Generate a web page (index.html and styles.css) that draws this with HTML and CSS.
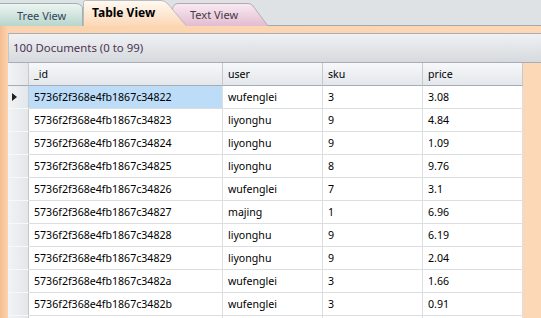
FILE: index.html
```html
<!DOCTYPE html>
<html lang="en">
<head>
<meta charset="UTF-8">
<title>Table View</title>
<link rel="stylesheet" href="styles.css">
</head>
<body>

<!-- Вкладки -->
<div class="tabs">
  <div class="tab tab-tree">
    <svg class="tab-shape" width="84" height="26" viewBox="0 0 84 26">
      <defs>
        <linearGradient id="gTree" x1="0" y1="0" x2="0" y2="1">
          <stop offset="0" stop-color="#eef6f3"/>
          <stop offset="1" stop-color="#b7d5cc"/>
        </linearGradient>
      </defs>
      <path d="M-1,26 V3.5 H76 Q80,3.5 82.5,7 V26" fill="url(#gTree)" stroke="#9cb3ad"/>
    </svg>
    <span class="tab-label">Tree View</span>
  </div>
  <div class="tab tab-table active">
    <svg class="tab-shape" width="104" height="26" viewBox="0 0 104 26">
      <defs>
        <linearGradient id="gTable" x1="0" y1="0" x2="0" y2="1">
          <stop offset="0" stop-color="#fffaf4"/>
          <stop offset="1" stop-color="#fcd6b2"/>
        </linearGradient>
      </defs>
      <path d="M0.5,27 V2.5 Q0.5,0.5 2.5,0.5 H78 Q82,0.5 85,4 L104,27 Z" fill="url(#gTable)"/>
      <path d="M0.5,26 V2.5 Q0.5,0.5 2.5,0.5 H78 Q82,0.5 85,4 L103,25.5" fill="none" stroke="#b9bcbf"/>
    </svg>
    <span class="tab-label">Table View</span>
  </div>
  <div class="tab tab-text">
    <svg class="tab-shape" width="100" height="26" viewBox="0 0 100 26">
      <defs>
        <linearGradient id="gText" x1="0" y1="0" x2="0" y2="1">
          <stop offset="0" stop-color="#f9ebf2"/>
          <stop offset="1" stop-color="#e2bcd0"/>
        </linearGradient>
      </defs>
      <path d="M0.5,26 L2.5,9 Q3.5,3.5 8,3.5 H78 Q81,3.5 83,6 L98,26" fill="url(#gText)" stroke="#b7a9b1"/>
    </svg>
    <span class="tab-label">Text View</span>
  </div>
</div>

<!-- Панель с таблицей -->
<div class="frame">
  <div class="toolbar">100 Documents (0 to 99)</div>
  <table class="grid">
    <colgroup>
      <col class="c-sel"><col class="c-id"><col class="c-col"><col class="c-col"><col class="c-col">
    </colgroup>
    <thead>
      <tr><th class="sel"></th><th>_id</th><th>user</th><th>sku</th><th>price</th></tr>
    </thead>
    <tbody>
      <tr><td class="sel"><span class="arrow"></span></td><td class="current">5736f2f368e4fb1867c34822</td><td>wufenglei</td><td>3</td><td>3.08</td></tr>
      <tr><td class="sel"></td><td>5736f2f368e4fb1867c34823</td><td>liyonghu</td><td>9</td><td>4.84</td></tr>
      <tr><td class="sel"></td><td>5736f2f368e4fb1867c34824</td><td>liyonghu</td><td>9</td><td>1.09</td></tr>
      <tr><td class="sel"></td><td>5736f2f368e4fb1867c34825</td><td>liyonghu</td><td>8</td><td>9.76</td></tr>
      <tr><td class="sel"></td><td>5736f2f368e4fb1867c34826</td><td>wufenglei</td><td>7</td><td>3.1</td></tr>
      <tr><td class="sel"></td><td>5736f2f368e4fb1867c34827</td><td>majing</td><td>1</td><td>6.96</td></tr>
      <tr><td class="sel"></td><td>5736f2f368e4fb1867c34828</td><td>liyonghu</td><td>9</td><td>6.19</td></tr>
      <tr><td class="sel"></td><td>5736f2f368e4fb1867c34829</td><td>liyonghu</td><td>9</td><td>2.04</td></tr>
      <tr><td class="sel"></td><td>5736f2f368e4fb1867c3482a</td><td>wufenglei</td><td>3</td><td>1.66</td></tr>
      <tr><td class="sel"></td><td>5736f2f368e4fb1867c3482b</td><td>wufenglei</td><td>3</td><td>0.91</td></tr>
      <tr><td class="sel"></td><td></td><td></td><td></td><td></td></tr>
    </tbody>
  </table>
</div>

</body>
</html>
```
FILE: styles.css
```css
body {
    margin: 0;
    background-color: #ffffff;
    font-family: "Noto Sans", "Open Sans", sans-serif;
    font-size: 10.6px;
    color: #000;
    overflow: hidden;
}

/* Вкладки */
.tabs {
    display: flex;
    align-items: flex-end;
    height: 25px;
    background-color: #dfe2e5;
    border-bottom: 1px solid #a2a9af;
}
.tab {
    position: relative;
    height: 26px;
    margin-bottom: -1px;
    font-size: 11px;
}
.tab-shape {
    position: absolute;
    left: 0;
    top: 0;
}
.tab-label {
    position: relative;
    display: block;
}
.tab-tree {
    width: 84px;
    z-index: 1;
}
.tab-tree .tab-label {
    padding: 8px 0 0 17px;
    color: #30465a;
}
.tab-table {
    width: 104px;
    margin-left: -1px;
    z-index: 3;
}
.tab-table .tab-label {
    padding: 4px 0 0 9px;
    font-size: 12px;
    font-weight: bold;
    color: #000;
}
.tab-text {
    width: 100px;
    margin-left: -17px;
    z-index: 2;
}
.tab-text .tab-label {
    padding: 7px 0 0 20px;
    color: #453a44;
}

/* Рамка вокруг таблицы */
.frame {
    background: linear-gradient(90deg, #f5be92 0, #fbd3ae 8px, #fdd8b7 100%);
    padding: 7px 0 0 8px;
    height: 300px;
}
.toolbar {
    height: 28px;
    line-height: 28px;
    padding-left: 4px;
    font-size: 11.4px;
    color: #4a3450;
    background: linear-gradient(#eff1f4, #d6d9dd);
    border-top: 1px solid #a9aeb4;
    border-bottom: 1px solid #a9aeb4;
    border-left: 1px solid #c3c7cb;
}

/* Таблица */
.grid {
    border-collapse: separate;
    border-spacing: 0;
    table-layout: fixed;
    width: 515px;
    background-color: #fff;
}
.c-sel { width: 21px; }
.c-id { width: 194px; }
.c-col { width: 100px; }
.grid th,
.grid td {
    box-sizing: border-box;
    height: 23px;
    padding: 0 5px;
    text-align: left;
    font-weight: normal;
    white-space: nowrap;
    overflow: hidden;
    border-right: 1px solid #dcdfe2;
    border-bottom: 1px solid #dcdfe2;
}
.grid th {
    background: linear-gradient(#f6f8fa, #e4e7eb);
    border-right-color: #c4c9ce;
    border-bottom-color: #a6acb2;
}
.grid td.sel,
.grid th.sel {
    padding: 0;
    background: linear-gradient(90deg, #f1f3f5, #e4e7ea);
    border-right-color: #c4c9ce;
}
.grid td.sel {
    border-bottom-color: #f7f8f9;
}
.grid td.current {
    background-color: #bcdcf8;
}
.arrow {
    display: block;
    width: 0;
    height: 0;
    margin-left: 4px;
    border-top: 4px solid transparent;
    border-bottom: 4px solid transparent;
    border-left: 5px solid #202020;
}
```
